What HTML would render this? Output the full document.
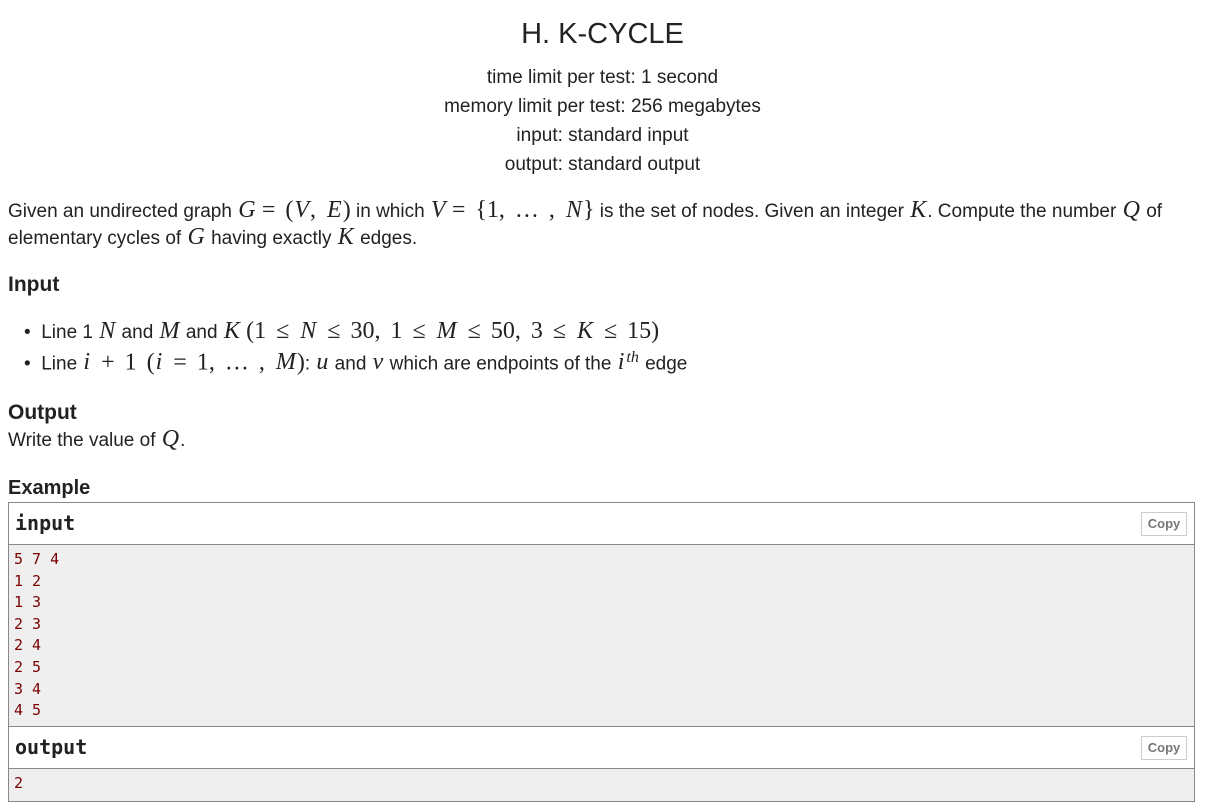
<!DOCTYPE html>
<html><head><meta charset="utf-8"><style>
body{margin:0;background:#fff;font-family:"Liberation Sans",Arial,sans-serif;color:#222;width:1205px;height:805px;overflow:hidden;position:relative}
.m{font-family:"Liberation Serif",serif;font-style:italic;font-size:24px;margin:0 1px}
.r{font-family:"Liberation Serif",serif;font-size:24px;word-spacing:4px}
.t{position:absolute;left:0;width:1205px;text-align:center}
.a{position:absolute;left:8px;font-size:19px;white-space:nowrap}
h3{position:absolute;left:8px;margin:0;font-size:21px;font-weight:bold;color:#222}
.box{position:absolute;left:8px;width:1185px;border:1px solid #888}
.hd{position:relative;height:41px;background:#fff;border-bottom:1px solid #888;font-family:"DejaVu Sans Mono",monospace;font-weight:bold;font-size:20px;line-height:41px;padding-left:6px}
.cp{position:absolute;right:7px;top:9px;height:22px;width:44px;border:1px solid #ccc;font-family:"Liberation Sans",sans-serif;font-size:13px;color:#777;line-height:22px;text-align:center;font-weight:bold;background:#fff}
pre{margin:0;background:#efefef;color:#7a0000;font-family:"DejaVu Sans Mono",monospace;font-size:15px;line-height:21.6px;padding:4px 5px}
</style></head><body>
<div class="t" style="top:18px;font-size:29px">H. K-CYCLE</div>
<div class="t" style="top:67px;font-size:19px">time limit per test: 1 second</div>
<div class="t" style="top:96px;font-size:19px">memory limit per test: 256 megabytes</div>
<div class="t" style="top:125px;font-size:19px">input: standard input</div>
<div class="t" style="top:154px;font-size:19px">output: standard output</div>
<div class="a" style="top:197px;line-height:27px">Given an undirected graph <span class="m">G</span> <span class="r">= (</span><span class="m">V</span><span class="r">, </span><span class="m">E</span><span class="r">)</span> in which <span class="m">V</span> <span class="r">= {1, … , </span><span class="m">N</span><span class="r">}</span> is the set of nodes. Given an integer <span class="m">K</span>. Compute the number <span class="m">Q</span> of</div>
<div class="a" style="top:224px;line-height:27px">elementary cycles of <span class="m">G</span> having exactly <span class="m">K</span> edges.</div>
<h3 style="top:273px">Input</h3>
<div class="a" style="top:318px;left:24px">•&nbsp; Line 1 <span class="m">N</span> and <span class="m">M</span> and <span class="m">K</span> <span class="r">(1 ≤ </span><span class="m">N</span><span class="r"> ≤ 30, 1 ≤ </span><span class="m">M</span><span class="r"> ≤ 50, 3 ≤ </span><span class="m">K</span><span class="r"> ≤ 15)</span></div>
<div class="a" style="top:349px;left:24px">•&nbsp; Line <span class="m">i</span><span class="r"> + 1 (</span><span class="m">i</span><span class="r"> = 1, … , </span><span class="m">M</span><span class="r">)</span>: <span class="m">u</span> and <span class="m">v</span> which are endpoints of the <span class="m">i</span><sup class="m" style="font-size:16px">th</sup> edge</div>
<h3 style="top:401px">Output</h3>
<div class="a" style="top:426px">Write the value of <span class="m">Q</span>.</div>
<h3 style="top:477px;font-size:20px">Example</h3>
<div class="box" style="top:502px">
<div class="hd">input<div class="cp">Copy</div></div>
<pre>5 7 4
1 2
1 3
2 3
2 4
2 5
3 4
4 5</pre>
<div class="hd" style="border-top:1px solid #888">output<div class="cp">Copy</div></div>
<pre style="height:24px">2</pre>
</div>
</body></html>
